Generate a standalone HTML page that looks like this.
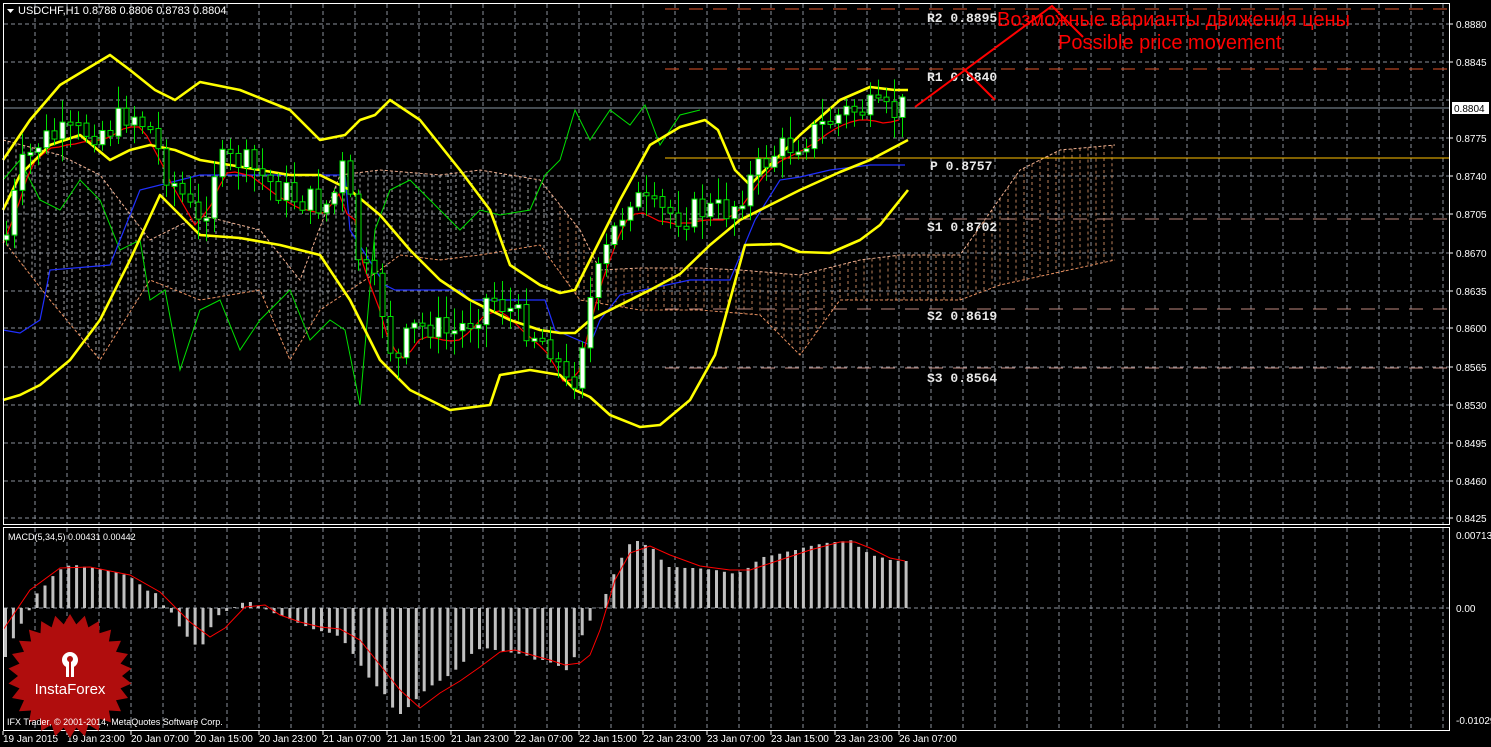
<!DOCTYPE html>
<html><head><meta charset="utf-8"><style>
html,body{margin:0;padding:0;background:#000;overflow:hidden}
svg{display:block}
text{font-family:"Liberation Sans",sans-serif}
</style></head><body>
<svg id="s" width="1491" height="747" viewBox="0 0 1491 747" xmlns="http://www.w3.org/2000/svg">
<rect width="1491" height="747" fill="#000"/>
<g id="grid" stroke="#8a919a" stroke-width="1" stroke-dasharray="4,3" fill="none"></g>
<g id="cloud" fill="none"></g>
<g stroke-width="1" fill="none">
<line x1="665" y1="9" x2="1449" y2="9" stroke="#e0542a" stroke-dasharray="14,10"/>
<line x1="665" y1="69" x2="1449" y2="69" stroke="#e0542a" stroke-dasharray="14,10"/>
<line x1="665" y1="158" x2="1449" y2="158" stroke="#ffc000"/>
<line x1="665" y1="219" x2="1449" y2="219" stroke="#c08a80" stroke-dasharray="14,10"/>
<line x1="665" y1="309" x2="1449" y2="309" stroke="#c08a80" stroke-dasharray="14,10"/>
<line x1="665" y1="368" x2="1449" y2="368" stroke="#c08a80" stroke-dasharray="14,10"/>
<line x1="3" y1="108" x2="1449" y2="108" stroke="#8896a4"/>
</g>
<g id="ind" fill="none"></g>
<g id="candles"></g>
<g id="macd"></g>
<g stroke="#fff" stroke-width="1" fill="none">
<rect x="3.5" y="3.5" width="1446" height="521"/>
<rect x="3.5" y="527.5" width="1446" height="203"/>
</g>
<g id="axis" fill="#fff" font-size="10"></g>
<g fill="#e8e8e8" font-size="13" font-weight="bold">
<text x="927" y="22" style="font-family:'Liberation Mono',monospace">R2 0.8895</text>
<text x="927" y="81" style="font-family:'Liberation Mono',monospace">R1 0.8840</text>
<text x="930" y="170" style="font-family:'Liberation Mono',monospace">P 0.8757</text>
<text x="927" y="231" style="font-family:'Liberation Mono',monospace">S1 0.8702</text>
<text x="927" y="320" style="font-family:'Liberation Mono',monospace">S2 0.8619</text>
<text x="927" y="382" style="font-family:'Liberation Mono',monospace">S3 0.8564</text>
</g>
<polyline points="915,107 1052,6 1083,37" stroke="#f00" stroke-width="2" fill="none"/>
<line x1="963" y1="68" x2="995" y2="100" stroke="#f00" stroke-width="2"/>
<text x="997" y="26" fill="#f00" font-size="20">Возможные варианты движения цены</text>
<text x="1058" y="49" fill="#f00" font-size="20">Possible price movement</text>
<polygon points="7,9 14,9 10.5,13" fill="#fff"/>
<text x="18" y="14" fill="#fff" font-size="11">USDCHF,H1  0.8788 0.8806 0.8783 0.8804</text>
<text x="8" y="540" fill="#fff" font-size="9">MACD(5,34,5) 0.00431 0.00442</text>
<polygon id="star" fill="#b00d0d"/>
<g fill="#fff">
<circle cx="70" cy="660" r="8"/>
<rect x="66" y="664" width="8" height="13"/>
</g>
<g fill="#b00d0d"><circle cx="70" cy="659" r="3"/><rect x="69" y="661" width="2" height="16"/></g>
<text x="70" y="694" fill="#fff" font-size="15" text-anchor="middle">InstaForex</text>
<text x="7" y="725" fill="#fff" font-size="9">IFX Trader, © 2001-2014, MetaQuotes Software Corp.</text>
<rect x="1452" y="102" width="37" height="12" fill="#fff"/>
<text x="1454" y="112" fill="#000" font-size="10">0.8804</text>
</svg>
<script>
const NS="http://www.w3.org/2000/svg";
function el(p,t,a){const e=document.createElementNS(NS,t);for(const k in a)e.setAttribute(k,a[k]);p.appendChild(e);return e;}
function interp(pts,x){if(x<=pts[0][0])return pts[0][1];for(let i=1;i<pts.length;i++){if(x<=pts[i][0]){const a=pts[i-1],b=pts[i];return a[1]+(b[1]-a[1])*(x-a[0])/(b[0]-a[0]);}}return pts[pts.length-1][1];}
const g=document.getElementById('grid');
for(let x=35;x<1449;x+=32){el(g,'line',{x1:x,y1:4,x2:x,y2:524});el(g,'line',{x1:x,y1:528,x2:x,y2:730});}
const ys=[24,62,100,138,176,214,253,291,328,367,405,443,481,518];
ys.forEach(y=>el(g,'line',{x1:4,y1:y,x2:1449,y2:y}));
el(g,'line',{x1:4,y1:608,x2:1449,y2:608});
const ax=document.getElementById('axis');
const pl=['0.8880','0.8845','0.8810','0.8775','0.8740','0.8705','0.8670','0.8635','0.8600','0.8565','0.8530','0.8495','0.8460','0.8425'];
ys.forEach((y,i)=>{if(i==2)return;el(ax,'line',{x1:1449,y1:y,x2:1453,y2:y,stroke:'#fff'});const t=el(ax,'text',{x:1456,y:y+4});t.textContent=pl[i];});
[[535,'0.00713'],[608,'0.00'],[720,'-0.01029']].forEach(a=>{const t=el(ax,'text',{x:1456,y:a[0]+4});t.textContent=a[1];});
const tl=['19 Jan 2015','19 Jan 23:00','20 Jan 07:00','20 Jan 15:00','20 Jan 23:00','21 Jan 07:00','21 Jan 15:00','21 Jan 23:00','22 Jan 07:00','22 Jan 15:00','22 Jan 23:00','23 Jan 07:00','23 Jan 15:00','23 Jan 23:00','26 Jan 07:00'];
tl.forEach((s,i)=>{const x=i==0?3:3+64*i;el(ax,'line',{x1:x,y1:731,x2:x,y2:735,stroke:'#fff'});const t=el(ax,'text',{x:x,y:742});t.textContent=s;});
const up=[[3,140],[60,155],[100,175],[150,240],[200,215],[260,230],[300,280],[340,175],[380,170],[440,175],[480,170],[540,180],[580,230],[600,270],[640,268],[700,268],[740,270],[800,275],[860,260],[900,255],[960,255],[1020,170],[1060,150],[1115,145]];
const lo=[[3,240],[50,300],[100,360],[150,280],[200,300],[260,290],[290,360],[320,310],[380,270],[400,255],[440,260],[480,255],[540,245],[580,300],[640,310],[700,310],[760,315],[800,355],[840,300],[870,300],[900,300],[960,300],[1000,285],[1115,260]];
const cl=document.getElementById('cloud');
for(let x=8;x<=1115;x+=8){const a=interp(up,x),b=interp(lo,x);el(cl,'line',{x1:x,y1:Math.min(a,b),x2:x,y2:Math.max(a,b),stroke:x<560?'#d0d0d0':'#e8a070','stroke-dasharray':'3,3','stroke-width':1,opacity:.8});}
const pts=a=>a.map(p=>p.join(',')).join(' ');
el(cl,'polyline',{points:pts(up),stroke:'#f0b090','stroke-dasharray':'3,2'});
el(cl,'polyline',{points:pts(lo),stroke:'#e89060','stroke-dasharray':'3,2'});
const ind=document.getElementById('ind');
const green=[[3,180],[20,160],[40,200],[60,210],[80,180],[100,200],[120,250],[140,240],[150,300],[165,290],[180,370],[200,310],[220,300],[240,350],[260,320],[290,290],[310,340],[330,320],[345,330],[360,405],[375,230],[390,190],[410,180],[430,200],[460,230],[480,210],[500,215],[530,210],[545,175],[560,160],[575,110],[590,140],[610,110],[630,125],[645,105],[660,145],[680,115],[700,110]];
el(ind,'polyline',{points:pts(green),stroke:'#00e000','stroke-width':1});
const blue=[[3,330],[20,333],[40,320],[50,270],[110,265],[140,190],[200,175],[345,175],[350,230],[385,285],[395,290],[460,290],[470,300],[545,300],[555,330],[590,345],[600,320],[620,295],[690,280],[730,280],[755,220],[780,180],[800,177],[830,170],[870,165],[905,165]];
el(ind,'polyline',{points:pts(blue),stroke:'#2030ff','stroke-width':1.2});
const close=[[5,240],[20,170],[40,140],[80,132],[110,128],[130,110],[150,130],[165,170],[185,200],[200,230],[215,165],[240,160],[260,175],[280,190],[300,200],[330,205],[345,160],[355,250],[380,300],[395,370],[410,330],[430,325],[450,335],[470,320],[490,295],[510,310],[530,330],[550,345],[570,395],[590,300],[610,240],[630,195],[650,210],[680,215],[700,210],[730,210],[750,180],[770,155],[790,145],[810,135],[830,120],[850,110],[870,110],[890,115],[905,105]];
const red=[];for(let x=3;x<=905;x+=8){red.push([x,Math.round(interp(close,x-10)*0.5+interp(close,x+5)*0.5+10)]);}
el(ind,'polyline',{points:pts(red),stroke:'#f00','stroke-width':1.2});
const ub=[[3,160],[30,120],[60,85],[110,55],[130,70],[155,90],[175,100],[200,82],[240,90],[290,110],[320,140],[345,135],[360,120],[375,115],[390,100],[420,120],[460,170],[490,210],[510,265],[540,285],[560,293],[575,290],[590,260],[620,200],[650,145],[680,127],[705,120],[718,130],[735,170],[750,185],[770,165],[800,135],[840,100],[870,87],[895,90],[908,90]];
const mb=[[3,210],[20,175],[50,145],[80,135],[110,160],[130,150],[150,145],[175,150],[200,160],[230,165],[260,170],[290,175],[320,175],[350,190],[380,215],[410,250],[440,280],[470,300],[510,320],[540,330],[560,333],[575,333],[590,320],[620,305],[650,290],[680,274],[710,245],[740,220],[770,205],[800,190],[840,172],[870,160],[908,140]];
const lb=[[3,400],[20,395],[40,385],[70,360],[100,320],[130,260],[160,195],[180,215],[200,235],[240,238],[280,245],[320,255],[350,300],[380,360],[410,390],[450,410],[490,405],[500,375],[530,370],[560,375],[575,390],[590,397],[610,415],[640,427],[660,425],[690,400],[715,355],[730,300],[745,245],[780,244],[800,252],[830,253],[860,240],[880,225],[908,190]];
[ub,mb,lb].forEach(a=>el(ind,'polyline',{points:pts(a),stroke:'#ffff00','stroke-width':2.6,'stroke-linejoin':'round'}));
const cg=document.getElementById('candles');
let seed=7;function rnd(){seed=(seed*9301+49297)%233280;return seed/233280;}
let prev=interp(close,0);
for(let x=6;x<=905;x+=8){let c=interp(close,x)+(rnd()-.5)*30;let o=prev;prev=c;let top=Math.min(o,c),bot=Math.max(o,c);if(bot-top<3){bot=top+3;}
el(cg,'line',{x1:x+.5,y1:top-rnd()*20-3,x2:x+.5,y2:bot+rnd()*20+3,stroke:'#00e000'});
el(cg,'rect',{x:x-2,y:top,width:5,height:bot-top,fill:c<o?'#fff':'#000',stroke:'#00e000','stroke-width':1});}
const mg=document.getElementById('macd');
const mv=[[5,657],[12,640],[20,625],[28,612],[35,595],[45,585],[55,573],[65,566],[75,565],[85,567],[95,568],[105,570],[115,572],[125,575],[135,580],[145,590],[155,593],[160,600],[165,609],[175,615],[180,630],[190,640],[200,650],[208,632],[215,618],[222,612],[230,610],[240,603],[250,602],[258,606],[265,609],[270,612],[285,617],[300,624],[315,630],[330,633],[340,637],[350,650],[360,665],[370,680],[380,690],[390,700],[395,718],[405,710],[415,700],[425,690],[435,683],[445,678],[455,670],[465,660],[475,650],[485,648],[495,650],[505,652],[515,653],[525,655],[535,660],[545,660],[555,665],[565,668],[570,680],[575,650],[585,628],[595,612],[605,595],[612,577],[620,560],[628,545],[635,540],[645,545],[655,550],[665,567],[675,567],[685,568],[695,568],[705,569],[715,570],[725,572],[735,574],[745,570],[755,562],[765,556],[775,555],[785,552],[795,550],[805,547],[815,545],[825,543],[835,542],[845,541],[850,540],[855,545],[862,549],[870,555],[880,557],[890,560],[900,561],[907,561]];
for(let x=5;x<=907;x+=7.9){const v=interp(mv,x);el(mg,'rect',{x:x-1,y:Math.min(v,608),width:3,height:Math.abs(v-608)||1,fill:'#c0c0c0'});}
const sig=[[3,630],[30,590],[60,568],[90,567],[130,575],[160,592],[190,622],[210,637],[225,628],[245,607],[265,605],[280,615],[300,622],[320,627],[340,629],[360,640],[380,665],[400,690],[420,708],[440,693],[460,681],[480,667],[500,652],[515,650],[535,656],[550,660],[565,665],[580,663],[590,655],[600,630],[615,580],[630,553],[650,546],[670,555],[700,566],[730,570],[750,570],[780,560],[810,550],[840,542],[855,542],[870,548],[890,558],[905,561]];
el(mg,'polyline',{points:pts(sig),stroke:'#f00',fill:'none','stroke-width':1});
const st=[];const N=26;for(let i=0;i<2*N;i++){const r=i%2?52:62;const a=Math.PI*i/N;st.push([70+r*Math.sin(a),676-r*Math.cos(a)].map(v=>v.toFixed(1)).join(','));}
document.getElementById('star').setAttribute('points',st.join(' '));
</script>
</body></html>
